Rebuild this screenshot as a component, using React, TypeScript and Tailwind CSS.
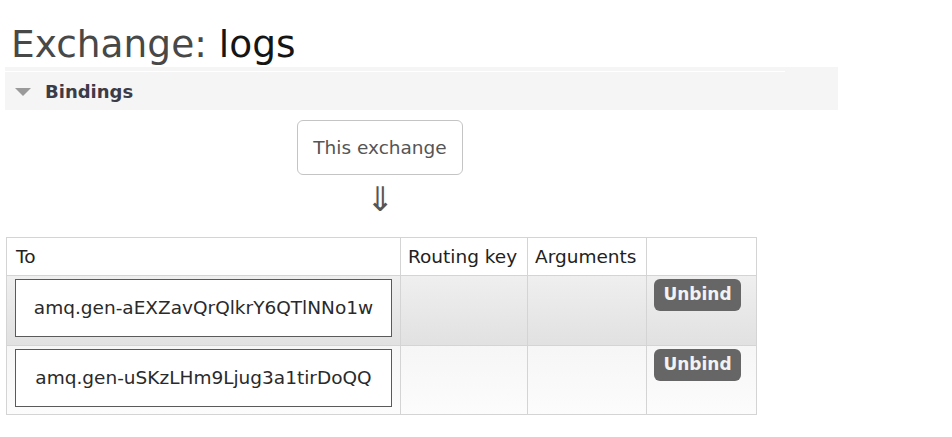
const bindings = [
  { dest: 'amq.gen-aEXZavQrQlkrY6QTlNNo1w', row: 'bg-linear-to-b from-[#efefef] to-[#e1e1e1]', h: 'h-[70px]' },
  { dest: 'amq.gen-uSKzLHm9Ljug3a1tirDoQQ', row: 'bg-linear-to-b from-[#f6f6f6] to-[#fcfcfc]', h: 'h-[69px]' },
];

const App = () => {
  return (
    <div className="min-h-screen bg-white font-['DejaVu_Sans',Verdana,sans-serif] text-[18.5px] text-[#333]">
      <h1 className="pl-[11px] pt-[22px] text-[37.5px] leading-[45px] font-normal text-[#484848]">
        Exchange: <span className="text-[#151515]">logs</span>
      </h1>

      <div className="ml-[5px] w-[833px] h-[43px] bg-[#f5f5f5] pt-[4px]">
        <div className="h-px w-[780px] bg-white" />
        <div className="flex items-center pl-[10px] pt-[8px] leading-[24px]">
          <svg width="16" height="9" viewBox="0 0 16 9" className="mr-[14px] mt-[1px]">
            <polygon points="0,0 16,0 8,8" fill="#9a9a9a" />
          </svg>
          <span className="font-bold text-[18px] text-[#3c3c48]">Bindings</span>
        </div>
      </div>

      <div className="ml-[6px] w-[751px]">
        <div className="flex flex-col items-center pr-[3px]">
          <div className="mt-[10px] flex h-[55px] w-[166px] items-center justify-center rounded-[6px] border border-[#c4c4c4] text-[#555]">
            This exchange
          </div>
          <div className="h-[62px] pt-[4px] text-[34px] leading-[40px] text-[#555]">⇓</div>
        </div>

        <div className="border-l border-t border-[#d4d4d4]">
          <div className="flex h-[38px] text-[#222]">
            <div className="w-[394px] border-r border-b border-[#d4d4d4] pl-[9px] pt-[8px] leading-[21px]">To</div>
            <div className="w-[127px] border-r border-b border-[#d4d4d4] pl-[7px] pt-[8px] leading-[21px]">Routing key</div>
            <div className="w-[119px] border-r border-b border-[#d4d4d4] pl-[7px] pt-[8px] leading-[21px]">Arguments</div>
            <div className="w-[110px] border-r border-b border-[#d4d4d4]" />
          </div>

          {bindings.map((b) => (
            <div key={b.dest} className={`flex ${b.h} ${b.row}`}>
              <div className="w-[394px] border-r border-b border-[#d4d4d4] pl-[8px] pt-[3px]">
                <div className="flex h-[58px] w-[377px] items-center justify-center border border-[#5a5a5a] bg-white text-[#2a2a2a]">
                  {b.dest}
                </div>
              </div>
              <div className="w-[127px] border-r border-b border-[#d4d4d4]" />
              <div className="w-[119px] border-r border-b border-[#d4d4d4]" />
              <div className="w-[110px] border-r border-b border-[#d4d4d4] pl-[7px] pt-[3px]">
                <button className="flex h-[32px] w-[87px] items-center justify-center rounded-[6px] bg-[#666666] text-[17px] font-bold text-[#f2f2f2]">
                  Unbind
                </button>
              </div>
            </div>
          ))}
        </div>
      </div>
    </div>
  );
};

export default App;
